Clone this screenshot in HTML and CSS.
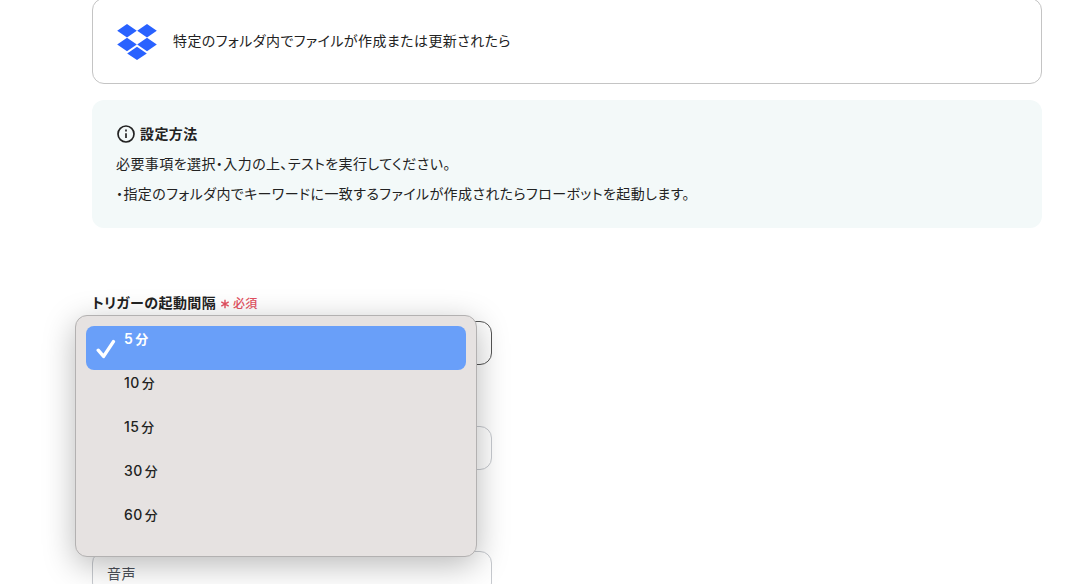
FILE: index.html
```html
<!DOCTYPE html>
<html lang="ja">
<head>
<meta charset="utf-8">
<meta name="viewport" content="width=device-width, initial-scale=1">
<title>トリガーの設定</title>
<link rel="stylesheet" href="styles.css">
</head>
<body>
<main class="page">
  <section class="app-card">
    <svg class="app-logo" viewBox="0 0 40 38" aria-hidden="true">
      <path d="M10 2 19.8 8.7 10 15.4 .2 8.7ZM30 2 39.8 8.7 30 15.4 20.2 8.7ZM10 15.8 19.8 22.5 10 29.2 .2 22.5ZM30 15.8 39.8 22.5 30 29.2 20.2 22.5ZM20 24.8 29.8 31.5 20 38 10.2 31.5Z"/>
    </svg>
    <p class="app-title">特定のフォルダ内でファイルが作成または更新されたら</p>
  </section>

  <section class="guide">
    <h2 class="guide-heading">
      <svg class="info-icon" viewBox="0 0 18 18" aria-hidden="true">
        <circle cx="9" cy="9" r="7.2"/>
        <path d="M9 8.3v4.4M9 5v1.7"/>
      </svg>
      設定方法
    </h2>
    <p class="guide-text">必要事項を選択・入力の上、テストを実行してください。</p>
    <p class="guide-text">・指定のフォルダ内でキーワードに一致するファイルが作成されたらフローボットを起動します。</p>
  </section>

  <form class="form">
    <div class="field field-open">
      <label class="field-label" for="interval">トリガーの起動間隔 <span class="required"><svg class="asterisk" viewBox="0 0 10 10" aria-hidden="true"><path d="M5 .8v8.4M1.3 2.9l7.4 4.2M8.7 2.9 1.3 7.1"/></svg>必須</span></label>
      <select class="control control-active" id="interval">
        <option>5分</option>
        <option>10分</option>
        <option>15分</option>
        <option>30分</option>
        <option>60分</option>
      </select>
      <div class="menu" role="listbox" aria-label="トリガーの起動間隔">
        <button class="menu-item menu-item-selected" type="button" role="option" aria-selected="true">
          <svg class="check" viewBox="0 0 20 20" aria-hidden="true"><path d="M2.2 11.2 7.6 17.4 17.4 2.6"/></svg>5<span class="unit">分</span></button>
        <button class="menu-item" type="button" role="option" aria-selected="false">10<span class="unit">分</span></button>
        <button class="menu-item" type="button" role="option" aria-selected="false">15<span class="unit">分</span></button>
        <button class="menu-item" type="button" role="option" aria-selected="false">30<span class="unit">分</span></button>
        <button class="menu-item" type="button" role="option" aria-selected="false">60<span class="unit">分</span></button>
      </div>
    </div>
    <div class="field">
      <input class="control" type="text" aria-label="フォルダ">
    </div>
    <div class="field field-keyword">
      <input class="control" type="text" aria-label="キーワード" value="音声">
    </div>
  </form>
</main>
</body>
</html>
```
FILE: styles.css
```css
* {
  box-sizing: border-box;
}

body {
  margin: 0;
  height: 100vh;
  overflow: hidden;
  background: #fff;
  color: #222;
  font-family: Inter, "Noto Sans CJK JP", sans-serif;
  font-size: 14px;
  line-height: 30px;
  font-feature-settings: "palt";
  letter-spacing: 0.03em;
}

h2,
p {
  margin: 0;
}

.page {
  padding: 0 28px 0 92px;
}

.app-card {
  display: flex;
  align-items: center;
  gap: 16px;
  margin-top: -2px;
  padding: 23px 24px;
  border: 1px solid #c4c4c4;
  border-radius: 12px;
}

.app-logo {
  width: 40px;
  height: 38px;
  fill: #2962ff;
}

.app-title {
  line-height: 36px;
}

.guide {
  margin-top: 16px;
  padding: 19px 24px;
  border-radius: 12px;
  background: #f3f9f9;
}

.guide-heading {
  display: flex;
  align-items: center;
  gap: 4px;
  font-size: 14px;
  font-weight: 700;
}

.info-icon {
  width: 20px;
  height: 20px;
  fill: none;
  stroke: #222;
  stroke-width: 1.5;
}

.form {
  display: flex;
  flex-direction: column;
  align-items: flex-start;
  padding-top: 60px;
}

.field {
  position: relative;
  width: 100%;
  max-width: 400px;
  margin-bottom: 61px;
}

.field-keyword {
  margin-top: 20px;
}

.field-open {
  z-index: 1;
}

.field-label {
  display: block;
  margin-bottom: 2px;
  font-weight: 700;
}

.required {
  color: #e35060;
  font-size: 12px;
  font-weight: 500;
}

.asterisk {
  width: 10px;
  height: 10px;
  margin-right: 3px;
  vertical-align: -1px;
  fill: none;
  stroke: currentColor;
  stroke-width: 1.4;
}

.control {
  display: block;
  width: 100%;
  height: 44px;
  padding: 0 14px;
  border: 1px solid #c7cacf;
  border-radius: 12px;
  background: transparent;
  color: #4b4f58;
  font: inherit;
  font-feature-settings: inherit;
  letter-spacing: inherit;
  appearance: none;
}

.control-active {
  border-color: #555;
}

.menu {
  position: absolute;
  top: 27px;
  left: -17px;
  right: 15px;
  padding: 10px;
  border: 1px solid #b3b1b1;
  border-radius: 12px;
  background: #e6e2e1;
  box-shadow: 0 8px 32px rgba(0, 0, 0, 0.28);
}

.menu-item {
  display: block;
  position: relative;
  width: 100%;
  height: 44px;
  padding: 0 38px 18px;
  border: 0;
  border-radius: 8px;
  background: transparent;
  color: #222;
  font: inherit;
  font-weight: 500;
  font-feature-settings: inherit;
  letter-spacing: inherit;
  line-height: 26px;
  text-align: left;
}

.menu-item-selected {
  background: #699ff9;
  color: #fff;
  font-weight: 600;
}

.unit {
  margin-left: 2px;
  font-size: 13px;
}

.check {
  position: absolute;
  left: 10px;
  top: 13px;
  width: 20px;
  height: 20px;
  fill: none;
  stroke: #fff;
  stroke-width: 3.4;
  stroke-linecap: round;
  stroke-linejoin: round;
}
```
